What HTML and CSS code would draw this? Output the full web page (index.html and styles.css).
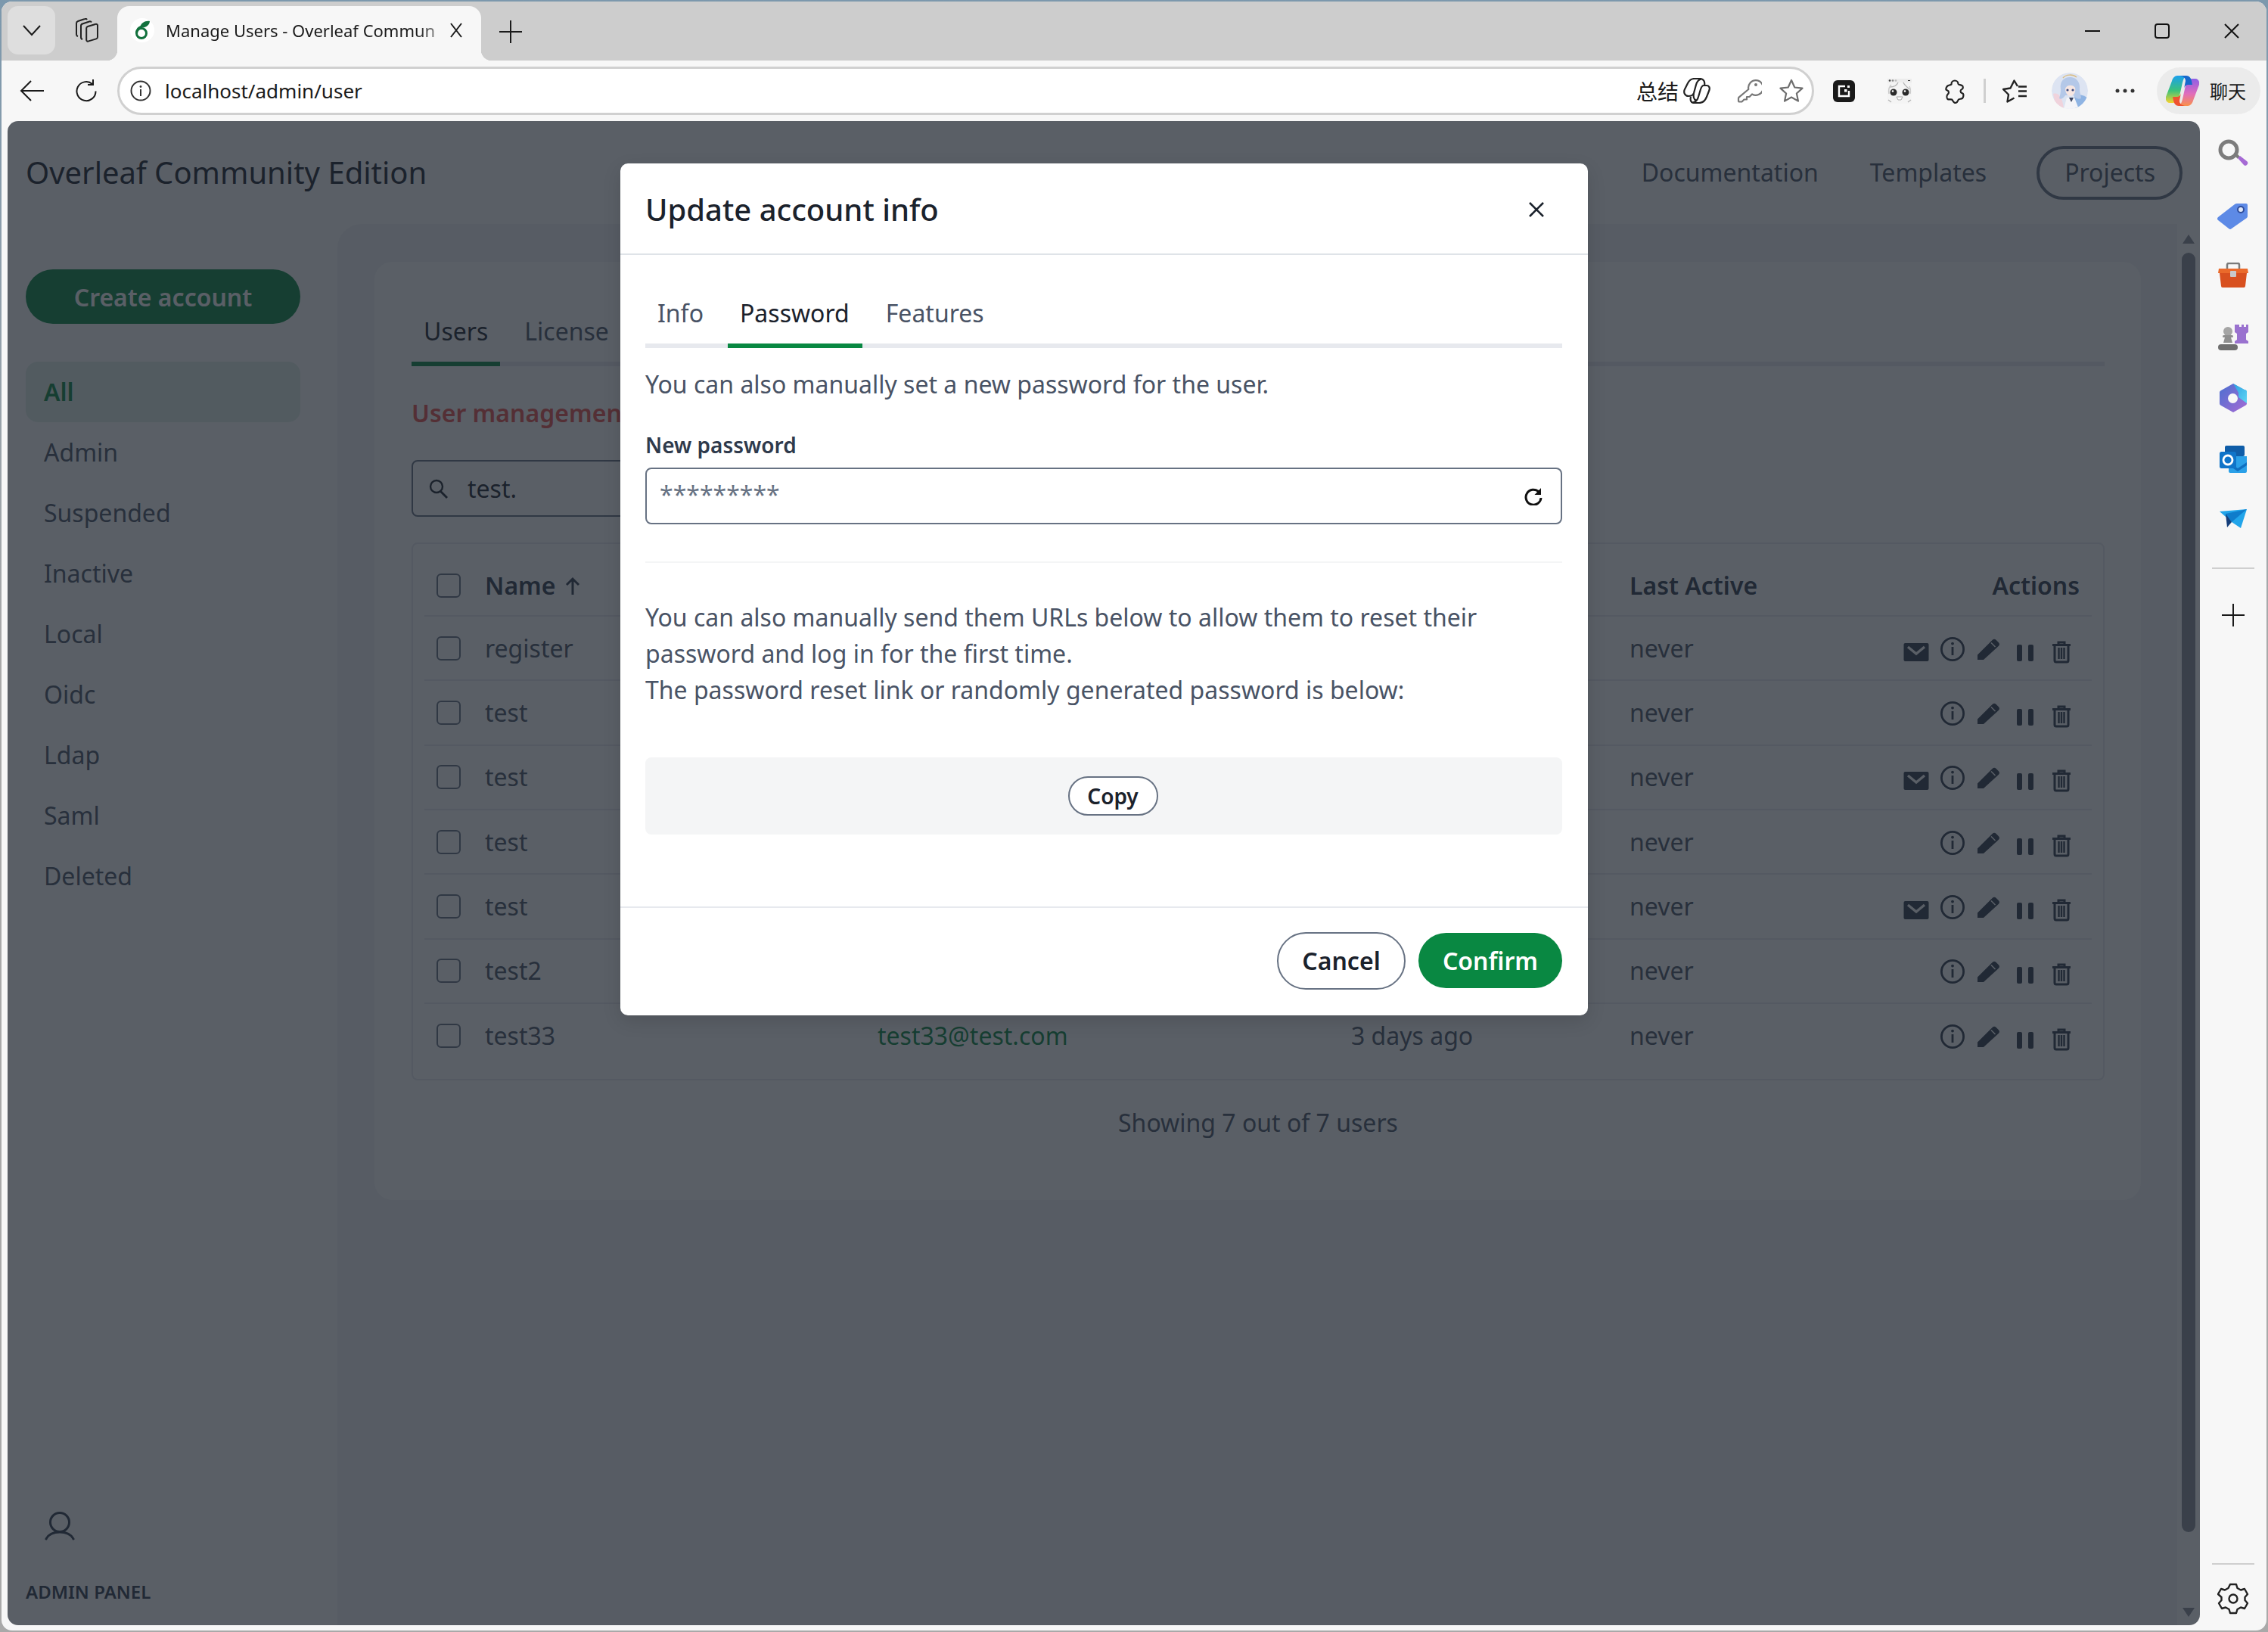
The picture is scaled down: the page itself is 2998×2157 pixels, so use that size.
FILE: index.html
```html
<!DOCTYPE html>
<html lang="en">
<head>
<meta charset="utf-8">
<title>Manage Users - Overleaf Community Edition</title>
<link rel="stylesheet" href="styles.css">
</head>
<body>
<svg class="defs" width="0" height="0" aria-hidden="true">
  <symbol id="i-mail" viewBox="0 0 48 48"><path fill="currentColor" d="M9.5 16h29a2 2 0 0 1 2 2v20a2 2 0 0 1-2 2h-29a2 2 0 0 1-2-2V18a2 2 0 0 1 2-2z"/><path fill="none" stroke="#fff" stroke-width="3.4" d="M13 21l11 9 11-9"/></symbol>
  <symbol id="i-info" viewBox="0 0 48 48"><circle cx="24" cy="24" r="14.6" fill="none" stroke="currentColor" stroke-width="2.8"/><circle cx="24" cy="16.6" r="1.9" fill="currentColor"/><path stroke="currentColor" stroke-width="2.8" d="M24 21v11"/></symbol>
  <symbol id="i-edit" viewBox="0 0 48 48"><path fill="currentColor" d="M9 38v-6.4L28.6 12a3.6 3.6 0 0 1 5.1 0l3 3a3.6 3.6 0 0 1 0 5.1L17 38z"/><path stroke="#fff" stroke-width="1.6" d="M27 15.5l5.5 5.5"/></symbol>
  <symbol id="i-pause" viewBox="0 0 48 48"><rect x="13" y="18" width="7" height="22" rx="2" fill="currentColor"/><rect x="28" y="18" width="7" height="22" rx="2" fill="currentColor"/></symbol>
  <symbol id="i-trash" viewBox="0 0 48 48"><path fill="none" stroke="currentColor" stroke-width="3" d="M12 18.5h24M20 18v-3h8v3M15 19v20a2 2 0 0 0 2 2h14a2 2 0 0 0 2-2V19"/><path stroke="currentColor" stroke-width="2.4" d="M20.5 22v15M24 22v15M27.5 22v15"/></symbol>
</svg>

<div class="window">
  <div class="tabstrip">
    <button class="tab-menu" type="button"><svg width="26" height="18" viewBox="0 0 26 18"><path d="M2 3l11 12L24 3" fill="none" stroke="#1a1a1a" stroke-width="2"/></svg></button>
    <svg class="collections" width="34" height="32" viewBox="0 0 34 32"><g fill="none" stroke="#222" stroke-width="2"><path d="M18 11l10-3a2 2 0 0 1 3 2v15a2.500 2.500 0 0 1-1.800 2.400l-10 3a2 2 0 0 1-3-2V13.500a2.500 2.500 0 0 1 1.800-2.500z"/><path d="M11 28a3 3 0 0 1-2-3V10.500a3 3 0 0 1 2-3l9-3a2.500 2.500 0 0 1 3 1"/><path d="M5 24a3 3 0 0 1-2-3V7a3 3 0 0 1 2-3l9-3a2.500 2.500 0 0 1 3 1"/></g></svg>
    <div class="tab">
      <span class="favicon"><svg width="22" height="26" viewBox="0 0 22 26"><circle cx="10" cy="17" r="6.500" fill="none" stroke="#12713d" stroke-width="3"/><path d="M3.500 17C3.500 12 7 9 11 8" fill="none" stroke="#12713d" stroke-width="3"/><path d="M8 9C9.500 3 15 0 21 1c-.5 6-6 9.500-13 8z" fill="#12713d"/></svg></span>
      <span class="tab-title">Manage Users - Overleaf Commun</span>
      <svg class="tab-close" width="20" height="20" viewBox="0 0 20 20"><path d="M3 1l14 18M17 1L3 19" stroke="#1a1a1a" stroke-width="2"/></svg>
    </div>
    <svg class="new-tab" width="30" height="30" viewBox="0 0 30 30"><path d="M15 0v30M0 15h30" stroke="#1a1a1a" stroke-width="2"/></svg>
    <div class="win-controls">
      <span class="win-btn"><svg width="20" height="20" viewBox="0 0 20 20"><path d="M0 10h20" stroke="#111" stroke-width="2"/></svg></span>
      <span class="win-btn"><svg width="20" height="20" viewBox="0 0 20 20"><rect x="1" y="1" width="18" height="18" rx="3" fill="none" stroke="#111" stroke-width="2"/></svg></span>
      <span class="win-btn"><svg width="20" height="20" viewBox="0 0 20 20"><path d="M1 1l18 18M19 1L1 19" stroke="#111" stroke-width="2"/></svg></span>
    </div>
  </div>

  <div class="toolbar">
    <span class="tool-btn"><svg width="32" height="28" viewBox="0 0 32 28"><path d="M15 1L2 14l13 13M2 14h30" fill="none" stroke="#1a1a1a" stroke-width="2"/></svg></span>
    <span class="tool-btn"><svg width="30" height="30" viewBox="0 0 30 30"><path d="M23 6a12.500 12.500 0 1 0 4.500 9.500" fill="none" stroke="#1a1a1a" stroke-width="2"/><path d="M24 0v7h-7" fill="none" stroke="#1a1a1a" stroke-width="2"/></svg></span>
    <div class="address">
      <svg class="addr-info" width="28" height="28" viewBox="0 0 28 28"><circle cx="14" cy="14" r="12.500" fill="none" stroke="#333" stroke-width="2"/><circle cx="14" cy="8.500" r="1.400" fill="#333"/><path d="M14 12v9" stroke="#333" stroke-width="2"/></svg>
      <span class="url">localhost/admin/user</span>
      <span class="addr-summary">总结</span>
      <svg class="addr-icon-summary" width="36" height="34" viewBox="0 0 36 34"><g fill="none" stroke="#222" stroke-width="2.200" stroke-linejoin="round"><path d="M7 24C2 24 0 19 2 15L6 7C8 3 11 1 15 1h7c5 0 7 4 6 9"/><path d="M24 1.500C20 2.500 18 5 17 9l-3 11c-1 3-3 4-7 4"/><path d="M27 10h4c3 0 4.500 3 3.500 6L31 25c-2 5-5 8-10 8h-7c-4 0-5-4-4-8"/><path d="M13 32.500c4-1 6-3.500 7-7.500l3-10c1-3 2-5 4-5"/><path d="M14 20c-1 4 0 8 3 10"/></g></svg>
      <svg class="addr-key" width="33" height="32" viewBox="0 0 33 32"><path d="M15.300 14A9.800 9.800 0 1 1 20 20.500L16.500 24H13v3.500H9.500L6.500 30.500H3.500A1.500 1.500 0 0 1 2 29v-3a2 2 0 0 1 .6-1.400z" fill="none" stroke="#777" stroke-width="2.200" stroke-linejoin="round"/><circle cx="25" cy="8" r="2" fill="#777"/></svg>
      <svg class="addr-star" width="32" height="32" viewBox="0 0 32 32"><path d="M16 2l4.300 9.500 10.200 1.100-7.600 6.900 2.100 10.100L16 24.500l-9 5.100 2.100-10.100-7.600-6.900 10.200-1.100z" fill="none" stroke="#6e6e6e" stroke-width="2.200" stroke-linejoin="round"/></svg>
    </div>
    <span class="ext-btn first"><svg width="29" height="29" viewBox="0 0 29 29"><rect width="29" height="29" rx="6" fill="#1a1a1a"/><path d="M16 8H8v13h13v-7" fill="none" stroke="#fff" stroke-width="2.400"/><rect x="15" y="12" width="3.500" height="3.500" fill="#fff"/><rect x="19" y="7" width="3" height="3" fill="#fff"/></svg></span>
    <span class="ext-btn"><svg width="32" height="33" viewBox="0 0 32 33"><rect width="32" height="33" fill="#f4f4f4"/><rect width="32" height="5" fill="#ececec"/><circle cx="3" cy="2.500" r="1.300" fill="#444"/><circle cx="7" cy="2.500" r="1.300" fill="#888"/><circle cx="11" cy="2.500" r="1.300" fill="#bbb"/><rect x="27" y="2" width="3" height="1" fill="#333"/><path d="M3 11c4 0 9-1 11-6M29 14c-3-3-7-6-8-9M1 28l4 3M31 28l-4 3" fill="none" stroke="#b5b5b5" stroke-width="1.300"/><path d="M2 20c-1-5 0-9 3-12M30 20c1-5 0-8-1-10" fill="none" stroke="#ccc" stroke-width="1.500"/><circle cx="8" cy="18" r="4.500" fill="#2c2c2c"/><circle cx="24" cy="18" r="4.500" fill="#2c2c2c"/><circle cx="7" cy="16.500" r="1.300" fill="#fff"/><circle cx="23" cy="16.500" r="1.300" fill="#fff"/><path d="M12 24h8l-2 4h-4z" fill="#fff" stroke="#aaa"/></svg></span>
    <span class="ext-btn"><svg width="30" height="33" viewBox="0 0 30 33"><path d="M10.500 7a4.500 4.500 0 0 1 9 0c0 1 3 1 5 2 1.500.7 1.500 2 1 4-.3 1-3 1-3 3.500s2.700 2.500 3.500 3.500c1 1.500 0 5-1 6-1.500 1-4 .5-5 1.500-.8.8-1 4-4 4.500s-3.500-3.500-5-4.500c-1.500-.5-4 .5-5.500-.5-1.500-1.500-1-4.500-.5-5.500 0-1 2-1 2-3.500s-3-2.500-3.500-3.500.5-4 2-5c1.500-1 4-1 5-2z" fill="none" stroke="#222" stroke-width="2.200" stroke-linejoin="round"/></svg></span>
    <span class="tool-sep"></span>
    <span class="ext-btn fav"><svg width="32" height="31" viewBox="0 0 32 31"><path d="M20 9L15.500 1.500 10.500 11.500 1 13l7 7-1.500 9.500 9-5" fill="none" stroke="#222" stroke-width="2.400" stroke-linejoin="round"/><path d="M21 9.500h11M21 15.500h11M21 22h11" stroke="#222" stroke-width="2.400"/></svg></span>
    <span class="ext-btn"><svg class="avatar" width="48" height="48" viewBox="0 0 48 48"><circle cx="24" cy="24" r="24" fill="#dde4f2"/><path d="M2 28C8 26 14 30 16 48H6z" fill="#f0d3dc"/><path d="M30 30c6-2 14 0 18 4l-8 14H30z" fill="#8fb4e3"/><path d="M12 22C10 10 18 5 26 6c8 1 12 8 11 16 0 5 2 8 2 12-5 2-8-1-10-4H18c-2 3-5 6-8 4 1-4 2-7 2-12z" fill="#b4c8e8"/><path d="M18 21c2-5 10-6 13-1 1 5-1 10-6 11-4 0-7-4-7-10z" fill="#f6e6e2"/><circle cx="21" cy="23" r="1.600" fill="#3b4c80"/><circle cx="28" cy="23" r="1.600" fill="#3b4c80"/><path d="M15 7C19 2 28 2 33 6" fill="none" stroke="#d9bd84" stroke-width="1.500"/><path d="M16 48l4-15h10l6 15z" fill="#f4f4f8"/><path d="M23 33l3 6 3-6z" fill="#3c4560"/></svg></span>
    <span class="ext-btn"><svg width="26" height="6" viewBox="0 0 26 6"><circle cx="3" cy="3" r="2.500" fill="#333"/><circle cx="13" cy="3" r="2.500" fill="#333"/><circle cx="23" cy="3" r="2.500" fill="#333"/></svg></span>
    <div class="chat-pill">
      <svg width="44" height="40" viewBox="0 0 44 40"><defs><linearGradient id="cp1" x1="0" y1="0" x2="0" y2="1"><stop offset="0" stop-color="#1a9fee"/><stop offset=".55" stop-color="#3cc27a"/><stop offset="1" stop-color="#f5d22e"/></linearGradient><linearGradient id="cp2" x1="0" y1="0" x2="0" y2="1"><stop offset="0" stop-color="#8d5fe6"/><stop offset=".55" stop-color="#e06cbc"/><stop offset="1" stop-color="#f9914a"/></linearGradient></defs><path d="M15 0H27C24 2 23 5 22 9L18 27C17 33 14 36 9 36H5C1 36-1 32 0 28L8 7C9 3 12 0 15 0z" fill="url(#cp1)"/><path d="M29 40H17C20 38 21 35 22 31L26 13C27 7 30 4 35 4H39C43 4 45 8 44 12L36 33C35 37 32 40 29 40z" fill="url(#cp2)"/><path d="M19 0H27C31 0 33 3 34 7L35 12H30C27 12 25 13 24 17L26 7C26 3 23 1 19 0z" fill="#1668cc"/><path d="M25 40H17C13 40 11 37 10 33L9 28H14C17 28 19 27 20 23L18 33C18 37 21 39 25 40z" fill="#ef5230"/></svg>
      <span class="chat-label">聊天</span>
    </div>
  </div>

  <div class="workspace">
    <div class="page">
      <header class="site-header">
        <span class="brand">Overleaf Community Edition</span>
        <nav class="site-nav">
          <span class="nav-docs">Documentation</span>
          <span>Templates</span>
          <span class="projects">Projects</span>
        </nav>
      </header>
      <div class="site-body">
        <aside class="sidebar">
          <button class="create" type="button">Create account</button>
          <ul class="filters">
            <li class="active">All</li>
            <li>Admin</li>
            <li>Suspended</li>
            <li>Inactive</li>
            <li>Local</li>
            <li>Oidc</li>
            <li>Ldap</li>
            <li>Saml</li>
            <li>Deleted</li>
          </ul>
          <div class="side-foot">
            <svg width="40" height="38" viewBox="0 0 40 38"><circle cx="20" cy="14" r="12.500" fill="none" stroke="currentColor" stroke-width="3"/><path d="M2 36c3-6 10-9 18-9s15 3 18 9" fill="none" stroke="currentColor" stroke-width="3" stroke-linecap="round"/></svg>
            <span class="admin-label">ADMIN PANEL</span>
          </div>
        </aside>
        <main class="panel">
          <section class="card">
            <div class="tabs">
              <span class="tab-link on">Users</span>
              <span class="tab-link">License</span>
            </div>
            <h2 class="section-title">User management</h2>
            <div class="search">
              <svg width="30" height="26" viewBox="0 0 30 26"><circle cx="11" cy="10" r="8" fill="none" stroke="currentColor" stroke-width="2.400"/><path d="M16 16l9 9" stroke="currentColor" stroke-width="2.800"/></svg>
              <span>test.</span>
            </div>
            <div class="table">
              <div class="row head">
                <span class="check"></span>
                <span class="name-head">Name <svg width="20" height="24" viewBox="0 0 20 24"><path d="M10 24V3M2 11l8-8 8 8" fill="none" stroke="currentColor" stroke-width="3"/></svg></span>
                <span></span><span></span>
                <span>Last Active</span>
                <span class="actions">Actions</span>
              </div>
              <div class="row"><span class="check"></span><span>register</span><span></span><span></span><span>never</span><span class="actions"><svg class="ai"><use href="#i-mail"/></svg><svg class="ai"><use href="#i-info"/></svg><svg class="ai"><use href="#i-edit"/></svg><svg class="ai"><use href="#i-pause"/></svg><svg class="ai"><use href="#i-trash"/></svg></span></div>
              <div class="row"><span class="check"></span><span>test</span><span></span><span></span><span>never</span><span class="actions"><svg class="ai"><use href="#i-info"/></svg><svg class="ai"><use href="#i-edit"/></svg><svg class="ai"><use href="#i-pause"/></svg><svg class="ai"><use href="#i-trash"/></svg></span></div>
              <div class="row"><span class="check"></span><span>test</span><span></span><span></span><span>never</span><span class="actions"><svg class="ai"><use href="#i-mail"/></svg><svg class="ai"><use href="#i-info"/></svg><svg class="ai"><use href="#i-edit"/></svg><svg class="ai"><use href="#i-pause"/></svg><svg class="ai"><use href="#i-trash"/></svg></span></div>
              <div class="row"><span class="check"></span><span>test</span><span></span><span></span><span>never</span><span class="actions"><svg class="ai"><use href="#i-info"/></svg><svg class="ai"><use href="#i-edit"/></svg><svg class="ai"><use href="#i-pause"/></svg><svg class="ai"><use href="#i-trash"/></svg></span></div>
              <div class="row"><span class="check"></span><span>test</span><span></span><span></span><span>never</span><span class="actions"><svg class="ai"><use href="#i-mail"/></svg><svg class="ai"><use href="#i-info"/></svg><svg class="ai"><use href="#i-edit"/></svg><svg class="ai"><use href="#i-pause"/></svg><svg class="ai"><use href="#i-trash"/></svg></span></div>
              <div class="row"><span class="check"></span><span>test2</span><span></span><span></span><span>never</span><span class="actions"><svg class="ai"><use href="#i-info"/></svg><svg class="ai"><use href="#i-edit"/></svg><svg class="ai"><use href="#i-pause"/></svg><svg class="ai"><use href="#i-trash"/></svg></span></div>
              <div class="row last"><span class="check"></span><span>test33</span><span class="email">test33@test.com</span><span>3 days ago</span><span>never</span><span class="actions"><svg class="ai"><use href="#i-info"/></svg><svg class="ai"><use href="#i-edit"/></svg><svg class="ai"><use href="#i-pause"/></svg><svg class="ai"><use href="#i-trash"/></svg></span></div>
            </div>
            <p class="showing">Showing 7 out of 7 users</p>
          </section>
        </main>
        <div class="scrollbar">
          <span class="arrow up"></span>
          <span class="thumb"></span>
          <span class="arrow down"></span>
        </div>
      </div>

      <div class="backdrop"></div>

      <div class="modal">
        <div class="modal-head">
          <h3>Update account info</h3>
          <svg width="22" height="20" viewBox="0 0 22 20"><path d="M2 1l18 18M20 1L2 19" stroke="#1b222c" stroke-width="2.600"/></svg>
        </div>
        <div class="modal-body">
          <div class="modal-tabs">
            <span>Info</span>
            <span class="on">Password</span>
            <span>Features</span>
          </div>
          <p class="note first">You can also manually set a new password for the user.</p>
          <label class="field-label">New password</label>
          <div class="field">
            <span class="stars">*********</span>
            <svg width="26" height="24" viewBox="0 0 26 24"><path d="M21 6a10 10 0 1 0 3 8" fill="none" stroke="#111" stroke-width="3"/><path d="M24 1v9h-8.500z" fill="#111"/></svg>
          </div>
          <div class="soft-rule"></div>
          <p class="note">You can also manually send them URLs below to allow them to reset their<br>password and log in for the first time.<br>The password reset link or randomly generated password is below:</p>
          <div class="code-box"><button class="copy" type="button">Copy</button></div>
        </div>
        <div class="modal-foot">
          <button class="btn-cancel" type="button">Cancel</button>
          <button class="btn-confirm" type="button">Confirm</button>
        </div>
      </div>
    </div>

    <aside class="edge">
      <span class="edge-item"><svg width="44" height="44" viewBox="0 0 44 44"><circle cx="16" cy="16" r="11" fill="none" stroke="#7c7c7c" stroke-width="5"/><path d="M26 26l3-3" stroke="#7c7c7c" stroke-width="5"/><path d="M28 27l3-3 9 7a3 3 0 0 1-4 5z" fill="#a66ad4"/></svg></span>
      <span class="edge-item"><svg width="44" height="44" viewBox="0 0 44 44"><path d="M2 24L24 7a5 5 0 0 1 3-1h12a2 2 0 0 1 2 2v14a4 4 0 0 1-1 3L20 39a3 3 0 0 1-4 0L2 28a2.500 2.500 0 0 1 0-4z" fill="#5d8ae6"/><circle cx="32" cy="14" r="4" fill="#dfe8fa" stroke="#2f4c9a" stroke-width="2"/></svg></span>
      <span class="edge-item"><svg width="40" height="36" viewBox="0 0 40 36"><path d="M12 8V3a2 2 0 0 1 2-2h12a2 2 0 0 1 2 2v5" fill="none" stroke="#7a7a7a" stroke-width="2.500"/><path d="M1 8h38l1 6H0z" fill="#ea6a2b"/><path d="M2 14h36l-2 17a2 2 0 0 1-2 2H6a2 2 0 0 1-2-2z" fill="#d8501f"/><rect x="16" y="11" width="8" height="8" rx="1" fill="#c9c9c9"/></svg></span>
      <span class="edge-item"><svg width="40" height="36" viewBox="0 0 40 36"><path d="M24 1h4v3h3V1h3v3h3V1h3v10l-3 2v8l3 2v3H22v-3l3-2v-8l-3-2V1z" fill="#9a72cf"/><circle cx="13" cy="10" r="6" fill="#a5a5a5"/><rect x="6" y="15" width="14" height="3" rx="1.500" fill="#8f8f8f"/><path d="M9 18h8l2 7H7z" fill="#8f8f8f"/><rect y="27" width="26" height="8" rx="4" fill="#6f6f6f"/></svg></span>
      <span class="edge-item"><svg width="36" height="38" viewBox="0 0 36 38"><defs><linearGradient id="m1" x1="0" y1="0" x2="1" y2="1"><stop offset="0" stop-color="#4a6fd0"/><stop offset="1" stop-color="#a66bd4"/></linearGradient><linearGradient id="m2" x1="0" y1="0" x2="1" y2="1"><stop offset="0" stop-color="#2d9fe0"/><stop offset="1" stop-color="#60d6f5"/></linearGradient></defs><path d="M18 0L2 9a3 3 0 0 0-2 3v14a3 3 0 0 0 2 3l16 9 16-9a3 3 0 0 0 2-3V12a3 3 0 0 0-2-3z" fill="url(#m1)"/><path d="M18 0l15 8a3 3 0 0 1 3 4v14l-11-8V12z" fill="url(#m2)"/><circle cx="17.500" cy="19.500" r="6.500" fill="#f7f7f7"/></svg></span>
      <span class="edge-item"><svg width="36" height="36" viewBox="0 0 36 36"><rect x="7" width="26" height="14" rx="2" fill="#0f5da8"/><path d="M12 14h24v20a2 2 0 0 1-2 2H14a2 2 0 0 1-2-2z" fill="#2aa0e8"/><path d="M12 22l12 8 12-8v4l-12 8-12-8z" fill="#0f6fc0"/><rect y="8" width="22" height="22" rx="2.500" fill="#0f74c9"/><circle cx="11" cy="19" r="6" fill="none" stroke="#fff" stroke-width="2.800"/></svg></span>
      <span class="edge-item"><svg width="36" height="28" viewBox="0 0 36 28"><path d="M0 3l36-3-8 25-12-8z" fill="#22a5ea"/><path d="M8 6l28-6-20 17z" fill="#0f7ccb"/><path d="M8 6l8 11-6 7z" fill="#153e7a"/></svg></span>
      <span class="edge-rule"></span>
      <span class="edge-plus"><svg width="30" height="30" viewBox="0 0 30 30"><path d="M15 0v30M0 15h30" stroke="#1a1a1a" stroke-width="2"/></svg></span>
      <span class="edge-rule bottom"></span>
      <span class="edge-gear"><svg width="42" height="42" viewBox="0 0 42 42"><path d="M17 2h8l1.500 5 4.500 2.500 5-1.500 4 7-3.500 4v4l3.500 4-4 7-5-1.500-4.500 2.500-1.500 5h-8l-1.500-5-4.500-2.500-5 1.500-4-7 3.500-4v-4L1 15l4-7 5 1.500L14.500 7z" fill="none" stroke="#222" stroke-width="2.400" stroke-linejoin="round"/><circle cx="21" cy="21" r="5.500" fill="none" stroke="#222" stroke-width="2.400"/></svg></span>
    </aside>
  </div>
</div>
</body>
</html>
```

FILE: styles.css
```css
* { box-sizing: border-box; }
html, body { margin: 0; height: 100%; }
body {
  width: 2998px;
  height: 2157px;
  overflow: hidden;
  background: linear-gradient(#7c98ad 0, #a9a9a9 40%);
  font-family: "Noto Sans", sans-serif;
  font-size: 32px;
  line-height: 48px;
  color: #495365;
}
.defs { position: absolute; }
button { font-family: inherit; cursor: pointer; }
p, h2, h3, ul { margin: 0; padding: 0; }
ul { list-style: none; }

.window {
  margin: 2px 2px 0;
  width: 2994px;
  height: 2153px;
  border-radius: 14px;
  overflow: hidden;
  background: #f7f7f7;
  display: flex;
  flex-direction: column;
}

/* tab strip */
.tabstrip {
  height: 78px;
  flex: none;
  background: #cdcdcd;
  display: flex;
  align-items: flex-start;
  padding: 6px 0 0 8px;
}
.tab-menu {
  width: 63px;
  height: 64px;
  border: 0;
  border-radius: 14px;
  background: #dedede;
  display: flex;
  align-items: center;
  justify-content: center;
  padding: 0;
}
.collections { margin: 16px 0 0 25px; }
.tab {
  position: relative;
  margin-left: 23px;
  width: 481px;
  height: 72px;
  background: #f7f7f7;
  border-radius: 16px 16px 0 0;
  display: flex;
  align-items: center;
  padding-bottom: 8px;
}
.tab::before, .tab::after {
  content: "";
  position: absolute;
  bottom: 0;
  width: 14px;
  height: 14px;
}
.tab::before { left: -14px; background: radial-gradient(circle at 0 0, transparent 14px, #f7f7f7 14.5px); }
.tab::after { right: -14px; background: radial-gradient(circle at 100% 0, transparent 14px, #f7f7f7 14.5px); }
.favicon {
  margin-left: 17px;
  width: 32px;
  height: 32px;
  border-radius: 50%;
  background: #fff;
  display: flex;
  align-items: center;
  justify-content: center;
  flex: none;
}
.tab-title {
  margin-left: 15px;
  width: 370px;
  white-space: nowrap;
  font-size: 22px;
  line-height: 32px;
  color: #1a1a1a;
  mask-image: linear-gradient(90deg, #000 90%, rgba(0, 0, 0, .25) 100%);
}
.tab-close { margin-left: 4px; flex: none; }
.new-tab { margin: 19px 0 0 24px; }
.win-controls { margin-left: auto; display: flex; margin-top: 23px; }
.win-btn { width: 92px; display: flex; justify-content: center; }

/* toolbar */
.toolbar {
  height: 80px;
  flex: none;
  display: flex;
  align-items: center;
  padding-left: 4px;
}
.tool-btn { width: 72px; display: flex; justify-content: center; flex: none; }
.address {
  margin-left: 5px;
  margin-top: -1px;
  width: 2243px;
  height: 64px;
  flex: none;
  background: #fff;
  border: 3px solid #d0d0d0;
  border-radius: 32px;
  display: flex;
  align-items: center;
  padding-right: 11px;
}
.addr-info { margin-left: 14px; flex: none; }
.url { margin-left: 18px; font-size: 26px; line-height: 36px; color: #1a1a1a; }
.addr-summary {
  margin-left: auto;
  font-family: "Noto Sans CJK SC", "Noto Sans", sans-serif;
  font-size: 28px;
  line-height: 36px;
  color: #1a1a1a;
}
.addr-icon-summary { margin-left: 6px; }
.addr-key { margin-left: 35px; }
.addr-star { margin-left: 23px; }
.ext-btn { width: 73px; display: flex; justify-content: center; align-items: center; flex: none; }
.ext-btn.first { margin-left: 3px; }
.ext-btn.fav { margin-left: 1px; }
.tool-sep { width: 3px; height: 32px; background: #cfcfcf; flex: none; margin-left: 2px; }
.avatar { border-radius: 50%; }
.chat-pill {
  margin-left: 6px;
  width: 137px;
  height: 62px;
  background: #ebebeb;
  border-radius: 31px;
  display: flex;
  align-items: center;
  padding-left: 12px;
  flex: none;
}
.chat-label {
  margin-left: 14px;
  font-family: "Noto Sans CJK SC", "Noto Sans", sans-serif;
  font-size: 24px;
  line-height: 32px;
  color: #1a1a1a;
}

/* workspace */
.workspace { flex: 1; display: flex; min-height: 0; padding: 0 0 7px 8px; }
.page {
  position: relative;
  width: 2898px;
  flex: none;
  background: #fff;
  border-radius: 14px;
  overflow: hidden;
  display: flex;
  flex-direction: column;
}
.site-header {
  height: 136px;
  flex: none;
  display: flex;
  align-items: center;
  justify-content: space-between;
  padding: 0 23px 0 24px;
}
.brand { font-size: 40px; line-height: 60px; color: #1b222c; }
.site-nav { display: flex; align-items: center; gap: 66px; font-size: 32px; }
.nav-docs { margin-right: 2px; }
.projects {
  border: 4px solid #677283;
  border-radius: 36px;
  height: 71px;
  padding: 0 32px 0 33px;
  display: flex;
  align-items: center;
}
.site-body { flex: 1; display: flex; min-height: 0; }
.sidebar {
  width: 436px;
  flex: none;
  padding: 60px 49px 26px 24px;
  display: flex;
  flex-direction: column;
}
.create {
  height: 72px;
  flex: none;
  border: 0;
  border-radius: 36px;
  background: #098842;
  color: #fff;
  font-size: 32px;
  font-weight: 600;
}
.filters { margin-top: 50px; }
.filters li { height: 80px; line-height: 80px; padding-left: 24px; border-radius: 16px; }
.filters li.active { background: #e3f1ea; color: #098842; font-weight: 600; }
.side-foot { margin-top: auto; display: flex; flex-direction: column; color: #2f3a4c; }
.side-foot svg { margin-left: 25px; }
.admin-label { margin-top: 50px; font-size: 24px; line-height: 36px; font-weight: 600; }

.panel {
  flex: 1;
  min-width: 0;
  background: #f4f5f6;
  border-radius: 32px 0 0 0;
  padding: 50px 48px 0 49px;
}
.card {
  height: 1240px;
  background: #fff;
  border-radius: 24px;
  padding: 68px 48px 0 49px;
}
.tabs { display: flex; border-bottom: 6px solid #e7e9ee; height: 70px; }
.tab-link { padding: 0 16px; height: 70px; margin-right: 16px; }
.tab-link.on { color: #1b222c; border-bottom: 6px solid #098842; }
.section-title { margin-top: 38px; font-size: 32px; line-height: 48px; font-weight: 600; color: #e8504d; white-space: nowrap; }
.search {
  margin-top: 38px;
  width: 760px;
  height: 75px;
  border: 2px solid #677283;
  border-radius: 8px;
  display: flex;
  align-items: center;
  gap: 22px;
  padding-left: 20px;
  color: #1b222c;
}
.table {
  margin-top: 34px;
  height: 711px;
  border: 2px solid #e7e9ee;
  border-radius: 8px;
  padding: 0 15px;
}
.row {
  height: 85.33px;
  display: grid;
  grid-template-columns: 64px 519px 626px 368px 330px 1fr;
  padding: 0 16px;
  align-items: center;
  border-bottom: 2px solid #e7e9ee;
  white-space: nowrap;
}
.row.last { border-bottom-color: transparent; }
.row.head { height: 96px; padding-top: 16px; font-weight: 600; color: #2f3a4c; }
.name-head { display: flex; align-items: center; gap: 12px; }
.check { width: 32px; height: 32px; border: 2px solid #677283; border-radius: 6px; display: block; }
.actions { display: flex; justify-content: flex-end; align-items: center; justify-self: end; }
.ai { width: 48px; height: 48px; color: #2f3a4c; flex: none; margin-top: 2px; }
.email { color: #098842; }
.showing { margin-top: 32px; text-align: center; }

.scrollbar { width: 30px; flex: none; padding: 0 6px; display: flex; flex-direction: column; align-items: center; }
.thumb { width: 18px; flex: 1; background: #8a8f9a; border-radius: 9px; margin-top: 12px; margin-bottom: 100px; }
.arrow { width: 0; height: 0; border-left: 8px solid transparent; border-right: 8px solid transparent; }
.arrow.up { border-bottom: 12px solid #8a8f9a; margin-top: 14px; }
.arrow.down { border-top: 12px solid #8a8f9a; margin-bottom: 11px; }

.backdrop { position: absolute; inset: 0; background: rgba(27, 34, 44, .725); }

/* modal */
.modal {
  position: absolute;
  left: 810px;
  top: 56px;
  width: 1279px;
  height: 1126px;
  background: #fff;
  border-radius: 10px;
  box-shadow: 0 8px 24px rgba(0, 0, 0, .12);
  display: flex;
  flex-direction: column;
}
.modal-head {
  height: 121px;
  flex: none;
  border-bottom: 2px solid #dfe3e8;
  display: flex;
  align-items: center;
  justify-content: space-between;
  padding: 2px 57px 0 33px;
}
.modal-head h3 { font-size: 40px; line-height: 56px; font-weight: 500; color: #1b222c; }
.modal-body { flex: 1; padding: 53px 34px 0 33px; }
.modal-tabs { display: flex; height: 70px; border-bottom: 6px solid #e7e9ee; gap: 15px; }
.modal-tabs span { padding: 0 17px 0 16px; height: 70px; }
.modal-tabs .on { color: #1b222c; border-bottom: 6px solid #098842; }
.note { line-height: 48px; margin-top: 48px; }
.note.first { margin-top: 24px; }
.field-label { display: block; margin-top: 36px; font-size: 28px; line-height: 40px; font-weight: 600; color: #2f3a4c; }
.field {
  margin-top: 10px;
  height: 75px;
  border: 2px solid #677283;
  border-radius: 8px;
  display: flex;
  justify-content: space-between;
  align-items: center;
  padding: 0 24px 0 17px;
}
.stars { font-size: 32px; line-height: 48px; color: #677283; margin-top: -4px; }
.soft-rule { margin-top: 49px; height: 2px; background: #f4f5f6; }
.code-box {
  margin-top: 65px;
  height: 102px;
  background: #f4f5f6;
  border-radius: 8px;
  display: flex;
  justify-content: center;
  align-items: center;
  padding-left: 24px;
}
.copy {
  width: 119px;
  height: 52px;
  padding: 0;
  background: #fff;
  border: 2px solid #677283;
  border-radius: 26px;
  font-size: 28px;
  font-weight: 600;
  color: #1b222c;
}
.modal-foot {
  height: 144px;
  flex: none;
  border-top: 2px solid #e7e9ee;
  display: flex;
  justify-content: flex-end;
  align-items: center;
  gap: 17px;
  padding: 0 34px 3px 0;
}
.btn-cancel, .btn-confirm { font-size: 32px; font-weight: 600; padding: 0; border-radius: 38px; }
.btn-cancel { width: 170px; height: 76px; background: #fff; border: 2px solid #677283; color: #1b222c; }
.btn-confirm { width: 190px; height: 73px; background: #098842; border: 0; color: #fff; }

/* right edge */
.edge { flex: 1; display: flex; flex-direction: column; align-items: center; padding-top: 4px; }
.edge-item { height: 80.5px; flex: none; display: flex; align-items: center; justify-content: center; }
.edge-rule { width: 56px; height: 2px; background: #cfcfcf; margin-top: 22px; flex: none; }
.edge-rule.bottom { margin-top: auto; }
.edge-plus { margin-top: 40px; height: 30px; }
.edge-gear { margin-top: 24px; margin-bottom: 14px; height: 42px; }
```
